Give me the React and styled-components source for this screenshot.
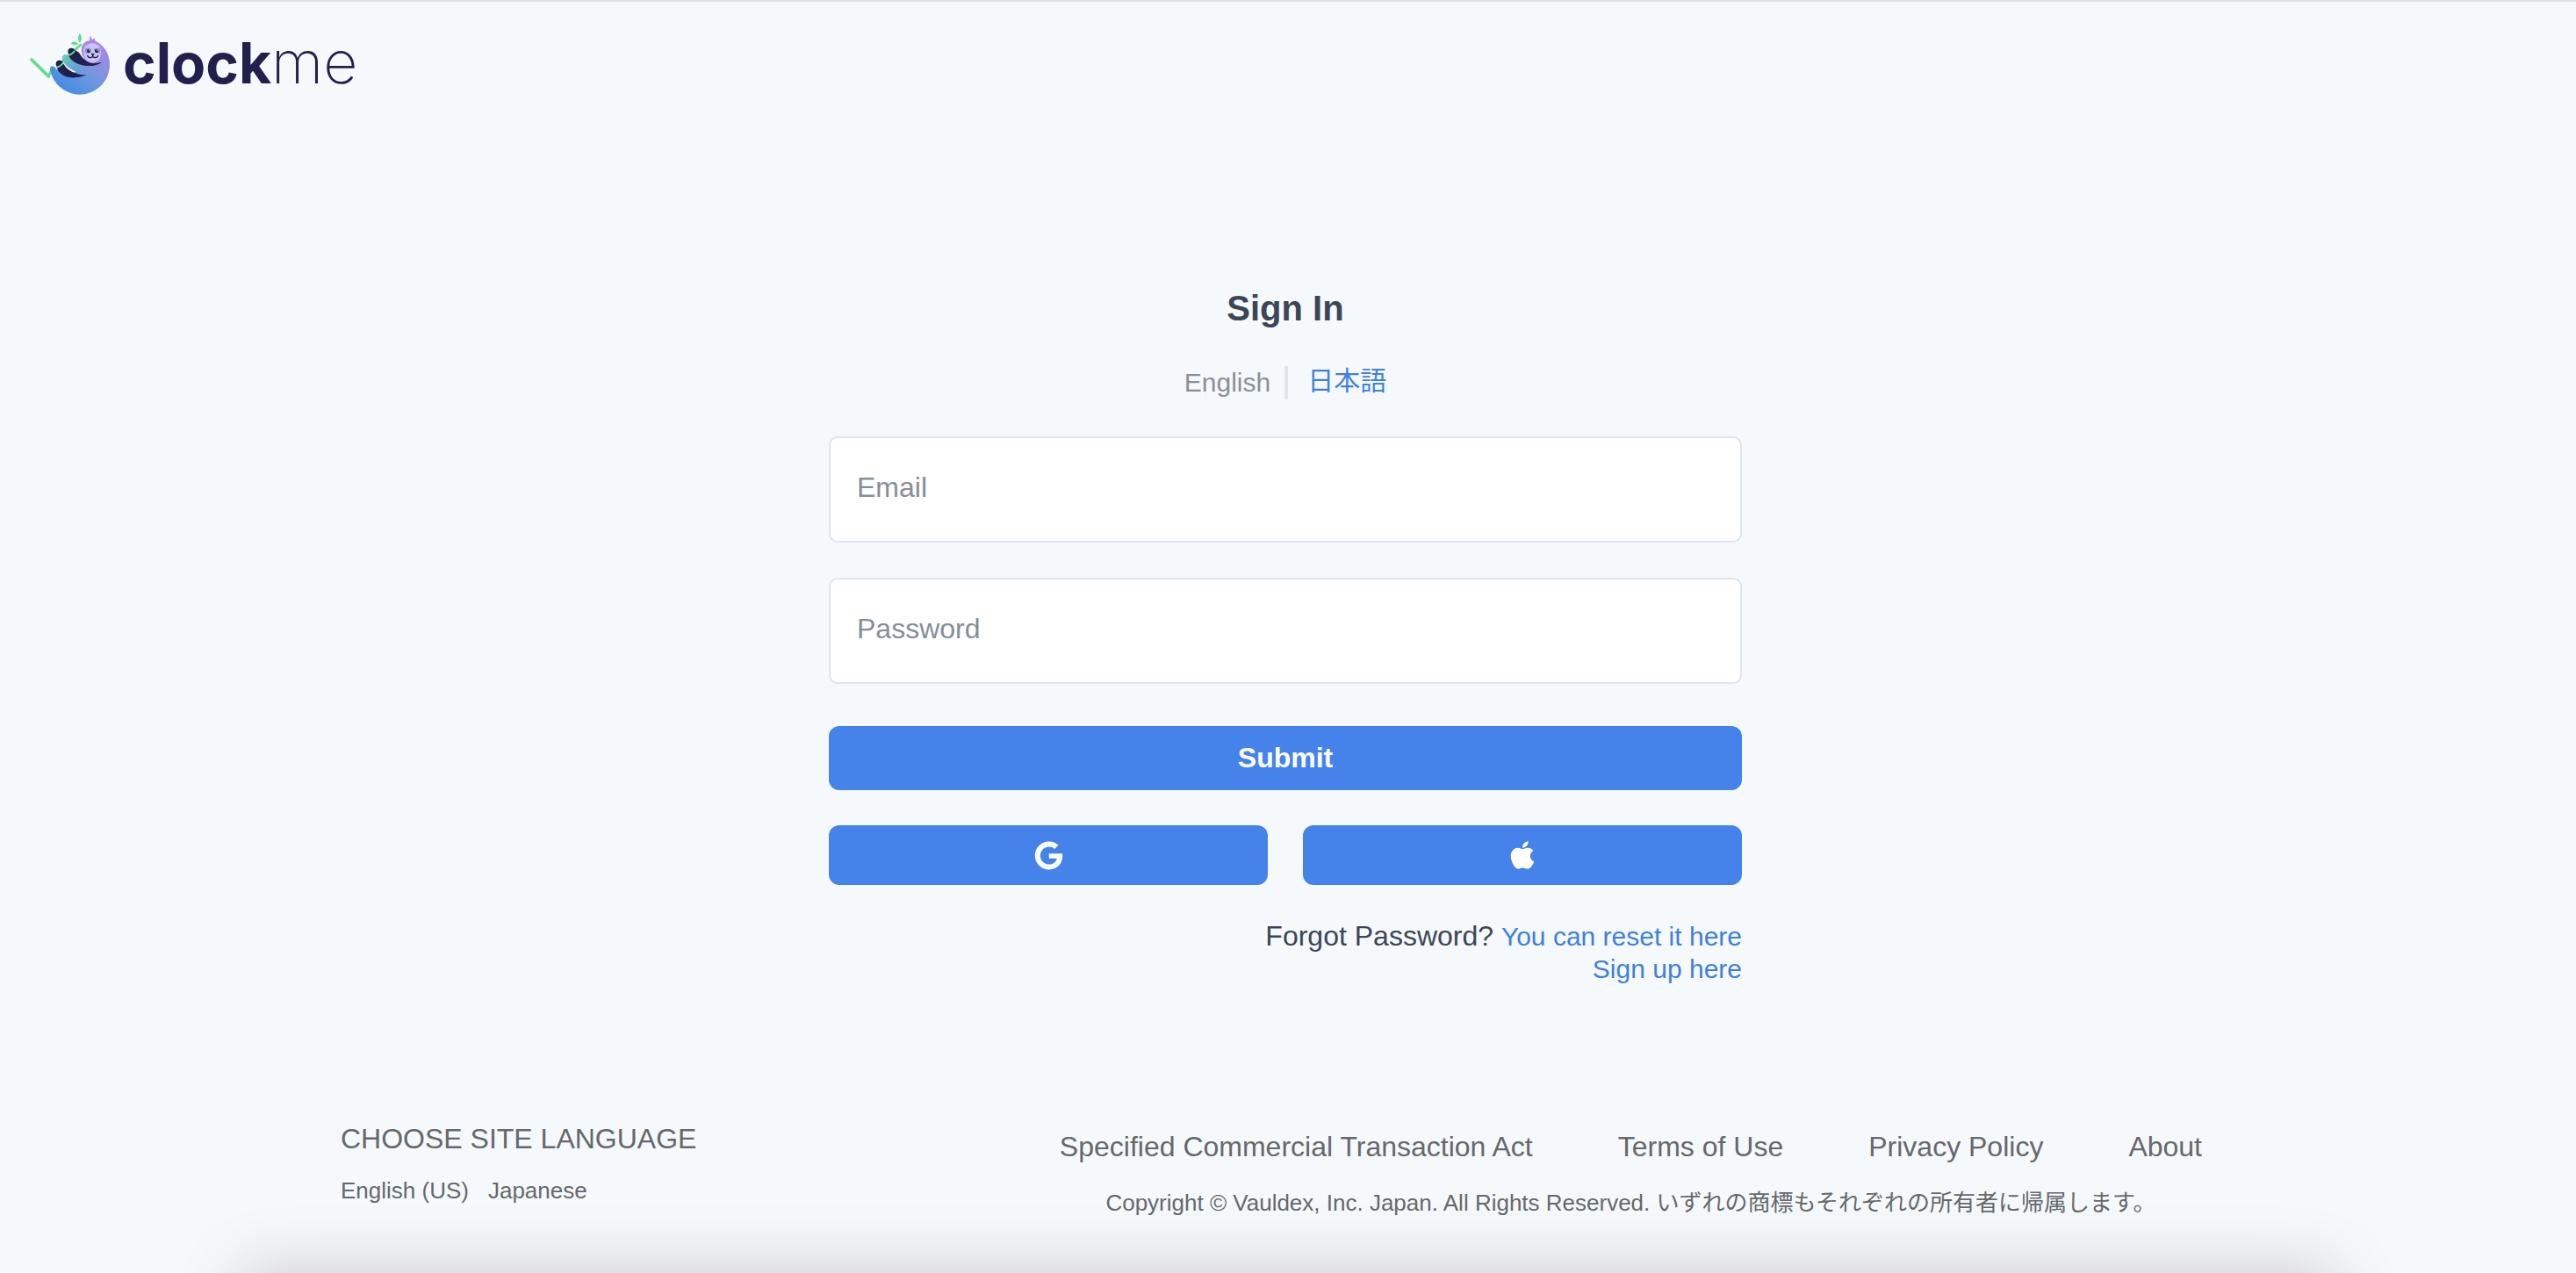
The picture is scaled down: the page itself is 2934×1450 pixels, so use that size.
import React from "react";
import styled, { createGlobalStyle } from "styled-components";
import { FaApple, FaGoogle } from "react-icons/fa";

const GlobalStyle = createGlobalStyle`
  *, *::before, *::after { box-sizing: border-box; }
  body {
    margin: 0;
    background: #f5f9fc;
    color: #3c4657;
    font-family: "Liberation Sans", Arial, "Noto Sans CJK JP", sans-serif;
    font-size: 32px;
  }
`;

const Page = styled.div`
  min-height: 100vh;
  overflow: hidden;
  border-top: 2px solid #dde2e7;
  padding-right: 6px;
`;

const Header = styled.header`
  display: flex;
  padding: 34px 32px 0;
`;

const Brand = styled.a`
  display: flex;
  align-items: center;
  gap: 12px;
  height: 73px;
  color: #211f4d;
  text-decoration: none;
`;

const Wordmark = styled.span`
  font-family: Inter, sans-serif;
  font-size: 64px;
  line-height: 68px;
  font-weight: 700;
  padding-bottom: 4px;
`;

const WordmarkThin = styled.span`
  font-size: 68px;
  font-weight: 200;
`;

const Main = styled.main`
  width: 100%;
  max-width: 1040px;
  margin: 218px auto 0;
  display: flex;
  flex-direction: column;
  gap: 40px;
`;

const Title = styled.h1`
  margin: 0;
  font-size: 40px;
  line-height: 48px;
  text-align: center;
`;

const Languages = styled.nav`
  display: flex;
  justify-content: center;
  align-items: center;
  height: 42px;
  font-size: 30px;
  line-height: 40px;
`;

const CurrentLanguage = styled.span`
  padding-right: 16px;
  color: #8a9097;
`;

const Divider = styled.span`
  width: 4px;
  height: 38px;
  background: #dfe4f0;
`;

const Link = styled.a`
  color: #3f7fe0;
  font-size: 30px;
  text-decoration: none;
`;

const LanguageLink = styled(Link)`
  height: 44px;
  padding-left: 22px;
`;

const Form = styled.form`
  display: flex;
  flex-direction: column;
  gap: 40px;
`;

const Field = styled.input`
  width: 100%;
  height: 121px;
  padding: 0 30px 4px;
  border: 2px solid #dfe5ef;
  border-radius: 10px;
  background: #fff;
  color: #3c4657;
  font: inherit;
  &::placeholder {
    color: #868e97;
    opacity: 1;
  }
`;

const Button = styled.button`
  flex: 1;
  display: flex;
  align-items: center;
  justify-content: center;
  height: 68px;
  padding: 0;
  border: 0;
  border-radius: 12px;
  background: #4583eb;
  color: #fff;
  font: inherit;
  font-weight: 700;
`;

const SubmitButton = styled(Button)`
  flex: none;
  height: 73px;
  margin-top: 8px;
`;

const ButtonRow = styled.div`
  display: flex;
  gap: 40px;
`;

const Help = styled.div`
  text-align: right;
  line-height: 37px;
`;

const HelpLine = styled.p`
  margin: 0;
`;

const Footer = styled.footer`
  display: flex;
  justify-content: space-between;
  width: 100%;
  max-width: 2152px;
  margin: 155px auto 0;
  padding-right: 32px;
  color: #66686b;
`;

const SiteLanguage = styled.section`
  display: flex;
  flex-direction: column;
  gap: 23px;
`;

const FooterHeading = styled.h2`
  margin: 0;
  font-size: 32px;
  line-height: 40px;
  font-weight: 400;
`;

const SiteLanguageList = styled.div`
  display: flex;
  gap: 22px;
`;

const FooterLink = styled.a`
  color: inherit;
  font-size: ${(p) => (p.$small ? "26px" : "32px")};
  line-height: ${(p) => (p.$small ? "32px" : "40px")};
  text-decoration: none;
`;

const Legal = styled.section`
  display: flex;
  flex-direction: column;
  align-items: center;
  gap: 28px;
  padding-top: 9px;
`;

const LegalLinks = styled.nav`
  display: flex;
  gap: 97px;
`;

const Copyright = styled.p`
  margin: 0;
  font-size: 26px;
  line-height: 32px;
`;

const BottomShade = styled.div`
  position: fixed;
  left: 275px;
  right: 275px;
  bottom: -120px;
  height: 120px;
  box-shadow: 0 0 80px rgba(50, 10, 20, 0.2);
  pointer-events: none;
`;

function Sloth() {
  return (
    <svg width="96" height="73" viewBox="36 48 288 219" aria-hidden="true">
      <defs>
        <linearGradient id="body" x1="140" y1="250" x2="290" y2="90" gradientUnits="userSpaceOnUse">
          <stop offset="0" stopColor="#3f8ae0" />
          <stop offset="0.5" stopColor="#6f98e0" />
          <stop offset="1" stopColor="#ab86e2" />
        </linearGradient>
        <linearGradient id="arm" x1="155" y1="130" x2="240" y2="190" gradientUnits="userSpaceOnUse">
          <stop offset="0" stopColor="#63d6ae" />
          <stop offset="1" stopColor="#6c97e0" stopOpacity="0" />
        </linearGradient>
      </defs>
      <path d="M48 144 L106 201" stroke="#62dd83" strokeWidth="11" strokeLinecap="round" />
      <path d="M106 202 L114 182 M152 150 L216 93" stroke="#62dd83" strokeWidth="8" fill="none" strokeLinecap="round" />
      <path d="M182 88 Q193 76 208 90 Q194 98 182 88Z M210 84 Q203 66 213 54 Q223 69 215 84Z" fill="#62dd83" />
      <path d="M225 100 C235 82 250 76 262 80 C292 88 315 122 315 160 C315 218 270 263 212 263 C162 263 119 224 111 178 C109 163 125 162 132 176 L160 195 L200 185 C175 172 156 160 153 138 C153 124 170 122 178 136 L230 155Z" fill="url(#body)" />
      <circle cx="184" cy="116" r="12" fill="#211f4d" />
      <path d="M174 129 C182 129 190 120 197 112 C208 116 212 122 218 132 C232 152 258 162 288 152 C268 170 224 168 200 156 C186 149 174 140 174 129Z" fill="#211f4d" />
      <path d="M153 138 C153 124 170 122 178 136 C192 158 232 172 262 159 L270 200 L235 200 C204 192 157 171 153 138Z" fill="url(#arm)" />
      <circle cx="143" cy="158" r="12" fill="#211f4d" />
      <path d="M135 172 C144 172 152 166 158 158 C166 180 204 198 237 196 C210 208 174 208 156 197 C144 190 136 182 135 172Z" fill="#211f4d" />
      <path d="M132 170 C141 168 149 164 154 156 M173 130 C183 126 190 122 195 114" stroke="#62dd83" strokeWidth="5" fill="none" />
      <path d="M218 108 C219 91 232 80 247 78 C245 70 247 64 251 63 C250 70 253 73 257 76 C258 72 261 71 264 71 C262 77 266 80 271 83 C299 99 294 148 262 157 C237 158 217 136 218 108Z" fill="#aa89e3" />
      <path d="M226 109 Q229 92 255 87 Q283 91 284 112 Q289 142 268 151 Q254 156 240 150 Q225 138 226 109Z" fill="#c7c5f4" />
      <path d="M229 105 Q244 100 252 109 Q248 124 233 125Z M260 108 Q271 101 283 106 L281 123 Q266 124 260 108Z" fill="#9a94cc" />
      <ellipse cx="243" cy="114" rx="6" ry="7" fill="#211f4d" />
      <ellipse cx="270" cy="114" rx="6" ry="7" fill="#211f4d" />
      <circle cx="245" cy="111" r="2" fill="#fff" />
      <circle cx="272" cy="111" r="2" fill="#fff" />
      <path d="M251 124 Q257 121 263 124 Q261 130 257 130 Q253 130 251 124Z" fill="#211f4d" />
      <path d="M239 131 Q244 141 257 134 Q269 141 275 131 M257 128 V134" stroke="#211f4d" strokeWidth="4" fill="none" strokeLinecap="round" />
    </svg>
  );
}

export default function App() {
  return (
    <Page>
      <GlobalStyle />
      <Header>
        <Brand href="#">
          <Sloth />
          <Wordmark>
            clock<WordmarkThin>me</WordmarkThin>
          </Wordmark>
        </Brand>
      </Header>
      <Main>
        <Title>Sign In</Title>
        <Languages>
          <CurrentLanguage>English</CurrentLanguage>
          <Divider />
          <LanguageLink href="#" lang="ja">日本語</LanguageLink>
        </Languages>
        <Form onSubmit={(e) => e.preventDefault()}>
          <Field type="email" aria-label="Email" placeholder="Email" />
          <Field type="password" aria-label="Password" placeholder="Password" />
          <SubmitButton type="submit">Submit</SubmitButton>
          <ButtonRow>
            <Button type="button" aria-label="Google">
              <FaGoogle size={33} />
            </Button>
            <Button type="button" aria-label="Apple">
              <FaApple size={36} />
            </Button>
          </ButtonRow>
        </Form>
        <Help>
          <HelpLine>
            Forgot Password? <Link href="#">You can reset it here</Link>
          </HelpLine>
          <HelpLine>
            <Link href="#">Sign up here</Link>
          </HelpLine>
        </Help>
      </Main>
      <Footer>
        <SiteLanguage>
          <FooterHeading>CHOOSE SITE LANGUAGE</FooterHeading>
          <SiteLanguageList>
            <FooterLink $small href="#">English (US)</FooterLink>
            <FooterLink $small href="#">Japanese</FooterLink>
          </SiteLanguageList>
        </SiteLanguage>
        <Legal>
          <LegalLinks>
            <FooterLink href="#">Specified Commercial Transaction Act</FooterLink>
            <FooterLink href="#">Terms of Use</FooterLink>
            <FooterLink href="#">Privacy Policy</FooterLink>
            <FooterLink href="#">About</FooterLink>
          </LegalLinks>
          <Copyright>
            Copyright © Vauldex, Inc. Japan. All Rights Reserved. いずれの商標もそれぞれの所有者に帰属します。
          </Copyright>
        </Legal>
      </Footer>
      <BottomShade />
    </Page>
  );
}
